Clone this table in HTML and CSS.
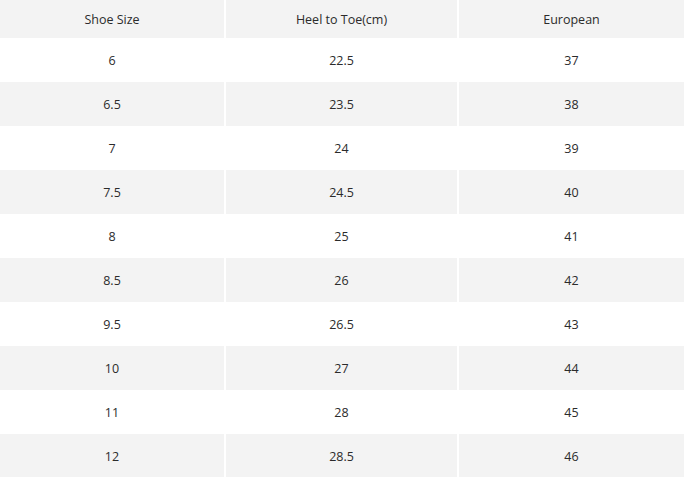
FILE: index.html
```html
<!DOCTYPE html>
<html>
<head>
<meta charset="utf-8">
<link rel="stylesheet" href="styles.css">
</head>
<body>
<table class="size-table">
  <colgroup><col class="c1"><col class="c2"><col class="c3"></colgroup>
  <thead>
    <tr class="head"><th>Shoe Size</th><th>Heel to Toe(cm)</th><th>European</th></tr>
  </thead>
  <tbody>
    <tr><td>6</td><td>22.5</td><td>37</td></tr>
    <tr class="alt"><td>6.5</td><td>23.5</td><td>38</td></tr>
    <tr><td>7</td><td>24</td><td>39</td></tr>
    <tr class="alt"><td>7.5</td><td>24.5</td><td>40</td></tr>
    <tr><td>8</td><td>25</td><td>41</td></tr>
    <tr class="alt"><td>8.5</td><td>26</td><td>42</td></tr>
    <tr><td>9.5</td><td>26.5</td><td>43</td></tr>
    <tr class="alt"><td>10</td><td>27</td><td>44</td></tr>
    <tr><td>11</td><td>28</td><td>45</td></tr>
    <tr class="alt"><td>12</td><td>28.5</td><td>46</td></tr>
  </tbody>
</table>
</body>
</html>
```
FILE: styles.css
```css
html, body {
  margin: 0;
  padding: 0;
  background: #ffffff;
}
.size-table {
  width: 684px;
  border-collapse: collapse;
  table-layout: fixed;
  font-family: "Open Sans", "Liberation Sans", sans-serif;
  font-size: 12.5px;
  color: #2b2b2b;
}
.c1 { width: 225px; }
.c2 { width: 233px; }
.c3 { width: 226px; }
.size-table th,
.size-table td {
  padding: 0;
  text-align: center;
  font-weight: normal;
  border-left: 2px solid #ffffff;
}
.size-table th:first-child,
.size-table td:first-child {
  border-left: 0;
}
.head th {
  height: 38px;
  background: #f3f3f3;
}
.size-table td {
  height: 44px;
}
.size-table tbody tr:last-child td {
  height: 45px;
}
.alt td {
  background: #f3f3f3;
}
```
